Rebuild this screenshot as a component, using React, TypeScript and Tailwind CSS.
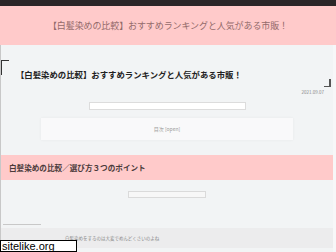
const jp = { fontFamily: '"Noto Sans CJK JP", "Noto Sans", sans-serif' }

export default function App() {
  return (
    <div className="relative h-[252px] w-[336px] overflow-hidden bg-[#f8f8f9]" style={jp}>
      <div className="h-[6px] bg-[#2a2527]" />
      <header className="flex h-[39px] items-center justify-center bg-[#ffcaca]">
        <p className="text-[9px] tracking-[-0.1px] text-[#946b6b]">
          【白髪染めの比較】おすすめランキングと人気がある市販！
        </p>
      </header>

      <div className="flex h-[207px] overflow-hidden border-l border-[#c8c8c8]">
        <main className="flex-1 bg-[#f2f4f5]">
          {/* title area */}
          <div className="relative ml-[11px] mr-[3px] pt-[22px]">
            <span className="absolute left-[-12px] top-[15px] h-[15px] w-[9px] border-l-2 border-t border-[#333]" />
            <h1 className="pl-[4px] text-[8.4px] font-bold leading-[14px] text-[#222]">
              【白髪染めの比較】おすすめランキングと人気がある市販！
            </h1>
            <span className="absolute right-[-1px] top-[34px] h-[8px] w-[7px] border-b border-r-2 border-[#555]" />
            <div className="mt-[8px] flex justify-end pr-[6px]">
              <span className="text-[4.5px] leading-[6px] text-[#888]">2021.09.07</span>
            </div>
          </div>

          <div className="mt-[7px] flex justify-center">
            <div className="h-[8px] w-[157px] border border-[#dcdcdc] bg-white" />
          </div>

          <div className="mx-[40px] mt-[8px] flex h-[22px] items-center justify-center bg-[#f9f9fa] shadow-[0_0_3px_rgba(0,0,0,0.05)]">
            <span className="text-[5px] text-[#999]">目次 [open]</span>
          </div>

          <div className="mt-[15px] ml-[-1px] flex h-[25px] items-center bg-[#ffcaca] pl-[9px]">
            <h2 className="text-[7.6px] font-bold text-[#4a3a3a]">白髪染めの比較／選び方３つのポイント</h2>
          </div>

          <div className="mt-[11px] flex justify-center">
            <div className="h-[7px] w-[78px] border border-[#dadada] bg-[#f7f7f7]" />
          </div>

          <div className="mt-[26px] ml-[2px] h-px w-[38px] bg-[#c8c8c8]" />
          <div className="mt-[3px] flex h-[20px] items-center bg-[#ececed] pl-[64px]">
            <span className="text-[4.5px] text-[#888]">白髪染めをするのは大変でめんどくさいのよね</span>
          </div>
        </main>
        <div className="w-[3px] bg-[#f7f7f8]" />
      </div>

      <div className="absolute bottom-0 left-0 flex h-[12px] w-[77px] items-center border border-black bg-white pl-[1px]">
        <span className="text-[11px] leading-none text-black" style={{ fontFamily: '"Liberation Sans", Arial, sans-serif' }}>
          sitelike.org
        </span>
      </div>
    </div>
  )
}
